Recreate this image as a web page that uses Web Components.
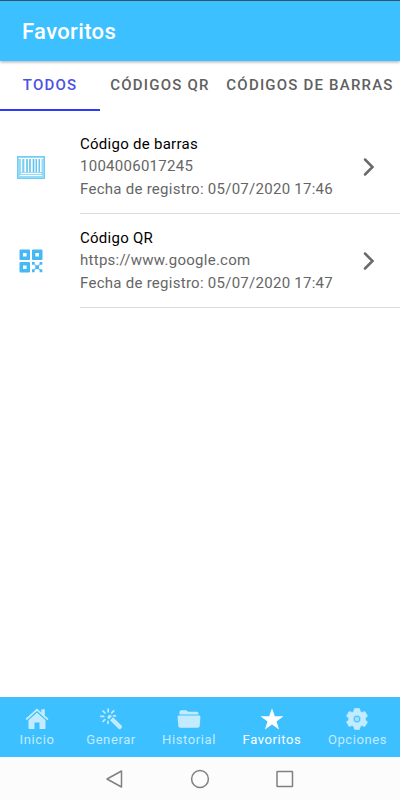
<!DOCTYPE html>
<html lang="es">
<head>
<meta charset="utf-8">
<meta name="viewport" content="width=device-width, initial-scale=1">
<title>Favoritos</title>
<style>
  html, body { margin: 0; height: 100%; }
  body { background: #fff; font-family: Roboto, "Noto Sans", sans-serif; overflow: hidden; }
</style>
</head>
<body>
<favorites-app></favorites-app>

<script>
const TABS = [
  { label: 'TODOS', active: true },
  { label: 'CÓDIGOS QR' },
  { label: 'CÓDIGOS DE BARRAS' }
];

const ITEMS = [
  {
    icon: 'barcode',
    title: 'Código de barras',
    value: '1004006017245',
    date: 'Fecha de registro: 05/07/2020 17:46'
  },
  {
    icon: 'qr',
    title: 'Código QR',
    value: 'https://www.google.com',
    date: 'Fecha de registro: 05/07/2020 17:47'
  }
];

const NAV = [
  { icon: 'home', label: 'Inicio' },
  { icon: 'wand', label: 'Generar' },
  { icon: 'folder', label: 'Historial' },
  { icon: 'star', label: 'Favoritos', active: true },
  { icon: 'gear', label: 'Opciones' }
];

// [width, height, svg content], all drawn in px units
const ICONS = {
  barcode: [28, 23, `
    <rect x=".5" y=".5" width="27" height="22" fill="#93dcf8" stroke="#74caf0"/>
    <path fill="#fff" d="M2 2h24v1H2zM4 17h20v1H4zM3 19h22v1H3z"/>
    <path fill="#fff" d="M4 3h1.500v13H4zM7.500 3H9v13H7.500zM11 3h1v13h-1zM14 3h1.500v13H14zM17.500 3h1v13h-1zM20 3h1.500v13H20zM23 3h1.500v13H23z"/>
    <path fill="#62bfec" d="M5.500 3h1v13h-1zM9.500 3h1v13h-1zM12.500 3h1v13h-1zM16 3h1v13h-1zM18.800 3h1v13h-1zM21.800 3h1v13h-1z"/>`],
  qr: [24, 24, `
    <path fill="#45b8f5" fill-rule="evenodd" d="M1.500 .5h8.500q1 0 1 1V10q0 1-1 1H1.500q-1 0-1-1V1.500q0-1 1-1zM4 4v3.600h3.600V4z
      M14 .5h8.500q1 0 1 1V10q0 1-1 1H14q-1 0-1-1V1.500q0-1 1-1zM16.400 4v3.600H20V4z
      M1.500 13H10q1 0 1 1v8.500q0 1-1 1H1.500q-1 0-1-1V14q0-1 1-1zM4 16.400V20h3.600v-3.600z
      M13 13h2.700v2.700H13zM20.600 13h2.700v2.700h-2.700zM16.300 16.300H20V20h-3.700zM13 20.300h2.700V23.300H13zM20.600 20.300h2.700V23.300h-2.700z"/>
    <path fill="#45b8f5" opacity=".6" d="M15.300 15.300h1.500v1.500h-1.500zM19.500 15.300H21v1.500h-1.500zM15.300 19.500h1.500V21h-1.500zM19.500 19.500H21V21h-1.500z"/>`],
  chevron: [14, 20, '<path d="M3 2.500 10.500 10 3 17.500" fill="none" stroke="#6a6a6a" stroke-width="2.500" stroke-linecap="round"/>'],
  home: [24, 24, `
    <path d="M12 5.500 3.500 13v8.300q0 .7.700.7h5.300v-6.500h5V22h5.300q.7 0 .7-.7V13z"/>
    <path d="M12 1.500.5 11.800l1.200 1.400L12 4l10.300 9.200 1.200-1.400-3.700-3.300V2.300h-3.500v3.100z"/>
    <path fill="none" stroke="#3dc0ff" stroke-width=".8" d="M2 13.800 12 4.900l10 8.900"/>`],
  wand: [24, 24, `
    <path d="m11 13.300 3-3 8.700 8.500q.9 1-.2 2.200l-.7.700q-1.200 1-2.200.1zM9.900 12.200l3-3-1.300-1.200q-.8-.6-1.700.2l-1.100 1.100q-.7.900-.1 1.700z"/>
    <path fill="none" stroke="currentColor" stroke-width="1.700" stroke-linecap="round" d="M9.200 2v2.800M1.800 9.300h2.900M4 4l1.900 1.900M14.700 3.800l-2 2M4 14.500l1.900-1.900M9 14.300v2M14.600 8.800h1.800"/>`],
  folder: [24, 24, `
    <path d="M2.500 7.500V5q0-1.800 1.700-1.800h4.300q1 0 1.600.7.600.8 1.500.8h8.200q1.700 0 1.700 1.700v1.100z"/>
    <path d="M1.800 8.600h20.400q1.300 0 1.200 1.300l-.7 9.200q-.2 1.700-1.800 1.700H3.100q-1.600 0-1.800-1.700L.6 9.900q-.1-1.300 1.200-1.300z"/>`],
  star: [24, 24, '<path d="m12 1.200 2.800 8h8.700l-7 5.200 2.600 8.100L12 17.600l-7.100 4.900 2.600-8.100-7-5.200h8.700z"/>'],
  gear: [24, 24, `
    <g fill-rule="evenodd">
      <path d="M9.500 1.500h5l.8 3 1.500.9 3.100-.9 2.600 4.400-2.100 2.200v1.800l2.100 2.200-2.600 4.400-3.100-.9-1.500.9-.8 3h-5l-.8-3-1.500-.9-3.100.9-2.600-4.400 2.100-2.200v-1.800L1.500 8.900l2.600-4.400 3.100.9 1.500-.9zM12 8.300a3.700 3.700 0 1 0 0 7.400 3.700 3.700 0 0 0 0-7.400z" stroke="currentColor" stroke-width=".6" stroke-linejoin="round"/>
      <circle cx="12" cy="12" r="2.300" opacity=".75"/>
    </g>`],
  back: [20, 20, '<path d="M16.500 2v16L2 10z" fill="none" stroke="#808080" stroke-width="1.500" stroke-linejoin="round"/>'],
  circle: [20, 20, '<circle cx="10" cy="10" r="8.400" fill="none" stroke="#808080" stroke-width="1.500"/>'],
  square: [20, 20, '<rect x="2" y="2.500" width="15.500" height="15" rx=".5" fill="none" stroke="#808080" stroke-width="1.500"/>']
};

class AppIcon extends HTMLElement {
  constructor() {
    super();
    this.attachShadow({ mode: 'open' });
  }

  connectedCallback() {
    const [w, h, body] = ICONS[this.getAttribute('name')];
    this.shadowRoot.innerHTML = `
      <style>
        :host { display: block; flex: none; }
        svg { display: block; fill: currentColor; }
      </style>
      <svg width="${w}" height="${h}" viewBox="0 0 ${w} ${h}" aria-hidden="true">${body}</svg>
    `;
  }
}

class AppHeader extends HTMLElement {
  constructor() {
    super();
    this.attachShadow({ mode: 'open' }).innerHTML = `
      <style>
        :host {
          display: flex; align-items: center; box-sizing: border-box; height: 61px;
          padding: 0 22px; background: #3dc0ff; border-top: 1px solid #30566b;
          color: #fff; font-size: 22px; font-weight: 500; letter-spacing: .35px;
          box-shadow: 0 1px 3px rgba(0, 0, 0, .35); z-index: 1;
        }
      </style>
      <slot></slot>
    `;
  }
}

class SegmentTab extends HTMLElement {
  constructor() {
    super();
    this.attachShadow({ mode: 'open' }).innerHTML = `
      <style>
        :host {
          display: flex; align-items: center; justify-content: center; box-sizing: border-box;
          border-bottom: 2px solid transparent; color: #606060;
          font-size: 15px; font-weight: 500; letter-spacing: 1.2px; white-space: nowrap;
        }
        :host([active]) { color: #4a50e8; border-color: #2a3cf5; }
      </style>
      <slot></slot>
    `;
  }
}

class CodeItem extends HTMLElement {
  constructor() {
    super();
    this.attachShadow({ mode: 'open' }).innerHTML = `
      <style>
        :host { display: flex; height: 94px; }
        .icon { width: 62px; display: flex; align-items: center; justify-content: center; }
        .body {
          flex: 1; display: flex; align-items: center; justify-content: space-between;
          margin-left: 18px; padding-right: 24px; border-bottom: 1px solid #dcdcdc;
        }
        .text {
          padding-top: 2px; font-size: 15px; color: #666;
          letter-spacing: .27px; white-space: nowrap;
        }
        .title { color: #000; line-height: 21px; }
        .value { line-height: 22px; }
        .date { line-height: 24px; }
      </style>
      <div class="icon"><slot name="icon"></slot></div>
      <div class="body">
        <div class="text">
          <div class="title"><slot name="title"></slot></div>
          <div class="value"><slot name="value"></slot></div>
          <div class="date"><slot name="date"></slot></div>
        </div>
        <app-icon name="chevron"></app-icon>
      </div>
    `;
  }
}

class NavButton extends HTMLElement {
  constructor() {
    super();
    this.attachShadow({ mode: 'open' }).innerHTML = `
      <style>
        :host {
          display: flex; flex-direction: column; align-items: center; padding-top: 10px;
          color: #c3ebff; font-size: 13px; line-height: 16px; letter-spacing: .6px;
        }
        :host([active]) { color: #fff; }
        .label { margin-top: 1px; padding-left: 1px; }
      </style>
      <slot name="icon"></slot>
      <span class="label"><slot></slot></span>
    `;
  }
}

class FavoritesApp extends HTMLElement {
  constructor() {
    super();
    this.attachShadow({ mode: 'open' });
  }

  connectedCallback() {
    this.shadowRoot.innerHTML = `
      <style>
        :host { display: flex; flex-direction: column; height: 800px; }
        .tabs { display: grid; grid-template-columns: 100px 120px 180px; height: 50px; flex: none; }
        main { flex: 1; padding-top: 9px; }
        nav { display: grid; grid-template-columns: 73fr 75fr 81fr 85fr 86fr; height: 60px; background: #3dc0ff; }
        .system {
          display: flex; justify-content: center; align-items: center; gap: 65px;
          height: 43px; background: #fcfcfc;
        }
      </style>
      <app-header>Favoritos</app-header>
      <div class="tabs">
        ${TABS.map(t => `<segment-tab ${t.active ? 'active' : ''}>${t.label}</segment-tab>`).join('')}
      </div>
      <main>
        ${ITEMS.map(i => `
          <code-item>
            <app-icon slot="icon" name="${i.icon}"></app-icon>
            <span slot="title">${i.title}</span>
            <span slot="value">${i.value}</span>
            <span slot="date">${i.date}</span>
          </code-item>`).join('')}
      </main>
      <nav>
        ${NAV.map(n => `<nav-button ${n.active ? 'active' : ''}><app-icon slot="icon" name="${n.icon}"></app-icon>${n.label}</nav-button>`).join('')}
      </nav>
      <div class="system">
        <app-icon name="back"></app-icon>
        <app-icon name="circle"></app-icon>
        <app-icon name="square"></app-icon>
      </div>
    `;
  }
}

customElements.define('app-icon', AppIcon);
customElements.define('app-header', AppHeader);
customElements.define('segment-tab', SegmentTab);
customElements.define('code-item', CodeItem);
customElements.define('nav-button', NavButton);
customElements.define('favorites-app', FavoritesApp);
</script>
</body>
</html>
